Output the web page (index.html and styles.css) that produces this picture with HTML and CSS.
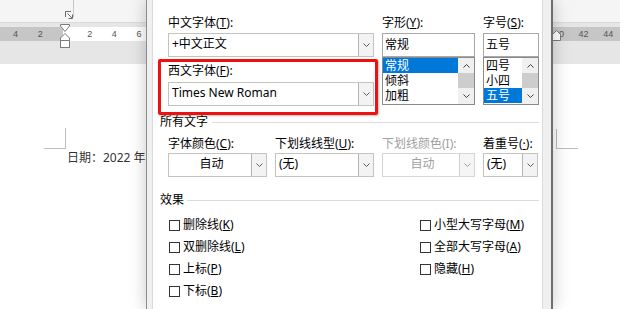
FILE: index.html
```html
<!DOCTYPE html>
<html lang="zh-CN">
<head>
<meta charset="utf-8">
<title>字体</title>
<link rel="stylesheet" href="styles.css">
</head>
<body>
<div class="app">
  <div class="ribbon">
    <svg class="launcher" width="8" height="8" viewBox="0 0 8 8">
      <path d="M0.5 6V0.5H6" fill="none" stroke="#6a6a6a"/>
      <path d="M2.5 2.5L7 7" fill="none" stroke="#6a6a6a"/>
      <path d="M3.5 7.5H7.5V3.5" fill="none" stroke="#6a6a6a"/>
    </svg>
    <span class="group-sep"></span>
  </div>
  <div class="rulerband">
    <div class="ruler">
      <span class="rn">4</span><span class="rn">2</span><span class="rn"></span>
      <span class="rn">2</span><span class="rn">4</span><span class="rn">6</span>
      <span class="rn-gap"></span>
      <span class="rn">40</span><span class="rn">42</span><span class="rn">44</span>
      <svg class="marker-left" width="11" height="25" viewBox="0 0 11 25">
        <path d="M0.5 0.5H9.5V2L5 7.5L0.5 2Z" fill="#fff" stroke="#7c7c7c"/>
        <path d="M5 9.5L9.5 14V16.5H0.5V14Z" fill="#fff" stroke="#7c7c7c"/>
        <rect x="0.5" y="16.5" width="9" height="7" fill="#fff" stroke="#7c7c7c"/>
      </svg>
      <svg class="marker-right" width="9" height="12" viewBox="0 0 9 12">
        <path d="M4.5 0.5L8.5 4.5V10.5H0.5V4.5Z" fill="#fff" stroke="#7c7c7c"/>
      </svg>
    </div>
  </div>
  <div class="doc">
    <span class="crop-mark crop-left"></span>
    <span class="crop-mark crop-right"></span>
    <p class="date">日期：2022 年</p>
  </div>

  <div class="dialog">
    <div class="panel">
      <div class="font-grid">
        <div class="col">
          <label class="lbl">中文字体(<u>T</u>):</label>
          <div class="combo"><span class="val">+中文正文</span><span class="drop"><svg width="7" height="4" viewBox="0 0 7 4"><path d="M0.5 0.5L3.5 3.5L6.5 0.5" fill="none" stroke="#5c5c5c"/></svg></span></div>
          <label class="lbl lbl-second">西文字体(<u>F</u>):</label>
          <div class="combo"><span class="val">Times New Roman</span><span class="drop"><svg width="7" height="4" viewBox="0 0 7 4"><path d="M0.5 0.5L3.5 3.5L6.5 0.5" fill="none" stroke="#5c5c5c"/></svg></span></div>
        </div>
        <div class="col">
          <label class="lbl">字形(<u>Y</u>):</label>
          <div class="textbox">常规</div>
          <div class="listbox">
            <ul class="items">
              <li class="sel">常规</li>
              <li>倾斜</li>
              <li>加粗</li>
            </ul>
            <div class="scroll">
              <span class="arrow"><svg width="7" height="4" viewBox="0 0 7 4"><path d="M0.5 3.5L3.5 0.5L6.5 3.5" fill="none" stroke="#404040"/></svg></span>
              <span class="thumb"></span>
              <span class="arrow"><svg width="7" height="4" viewBox="0 0 7 4"><path d="M0.5 0.5L3.5 3.5L6.5 0.5" fill="none" stroke="#404040"/></svg></span>
            </div>
          </div>
        </div>
        <div class="col">
          <label class="lbl">字号(<u>S</u>):</label>
          <div class="textbox">五号</div>
          <div class="listbox">
            <ul class="items">
              <li>四号</li>
              <li>小四</li>
              <li class="sel">五号</li>
            </ul>
            <div class="scroll">
              <span class="arrow"><svg width="7" height="4" viewBox="0 0 7 4"><path d="M0.5 3.5L3.5 0.5L6.5 3.5" fill="none" stroke="#404040"/></svg></span>
              <span class="thumb"></span>
              <span class="arrow"><svg width="7" height="4" viewBox="0 0 7 4"><path d="M0.5 0.5L3.5 3.5L6.5 0.5" fill="none" stroke="#404040"/></svg></span>
            </div>
          </div>
        </div>
      </div>

      <div class="group-head head-all"><span>所有文字</span><span class="rule"></span></div>

      <div class="attr-grid">
        <div class="col">
          <label class="lbl lbl-tight">字体颜色(<u>C</u>):</label>
          <div class="combo"><span class="val center">自动</span><span class="drop"><svg width="7" height="4" viewBox="0 0 7 4"><path d="M0.5 0.5L3.5 3.5L6.5 0.5" fill="none" stroke="#5c5c5c"/></svg></span></div>
        </div>
        <div class="col">
          <label class="lbl lbl-tight">下划线线型(<u>U</u>):</label>
          <div class="combo"><span class="val">(无)</span><span class="drop"><svg width="7" height="4" viewBox="0 0 7 4"><path d="M0.5 0.5L3.5 3.5L6.5 0.5" fill="none" stroke="#5c5c5c"/></svg></span></div>
        </div>
        <div class="col disabled">
          <label class="lbl lbl-tight">下划线颜色(I):</label>
          <div class="combo"><span class="val center">自动</span><span class="drop"><svg width="7" height="4" viewBox="0 0 7 4"><path d="M0.5 0.5L3.5 3.5L6.5 0.5" fill="none" stroke="#9a9a9a"/></svg></span></div>
        </div>
        <div class="col">
          <label class="lbl lbl-tight">着重号(<u>·</u>):</label>
          <div class="combo"><span class="val">(无)</span><span class="drop"><svg width="7" height="4" viewBox="0 0 7 4"><path d="M0.5 0.5L3.5 3.5L6.5 0.5" fill="none" stroke="#5c5c5c"/></svg></span></div>
        </div>
      </div>

      <div class="group-head head-effects"><span>效果</span><span class="rule"></span></div>

      <div class="effects">
        <div class="eff-col eff-left">
          <label class="check"><span class="box"></span><span class="txt">删除线(<u>K</u>)</span></label>
          <label class="check"><span class="box"></span><span class="txt">双删除线(<u>L</u>)</span></label>
          <label class="check"><span class="box"></span><span class="txt">上标(<u>P</u>)</span></label>
          <label class="check"><span class="box"></span><span class="txt">下标(<u>B</u>)</span></label>
        </div>
        <div class="eff-col">
          <label class="check"><span class="box"></span><span class="txt">小型大写字母(<u>M</u>)</span></label>
          <label class="check"><span class="box"></span><span class="txt">全部大写字母(<u>A</u>)</span></label>
          <label class="check"><span class="box"></span><span class="txt">隐藏(<u>H</u>)</span></label>
        </div>
      </div>
    </div>
  </div>

  <div class="highlight"></div>
</div>
</body>
</html>
```

FILE: styles.css
```css
* { box-sizing: border-box; margin: 0; padding: 0; }

html, body {
  width: 620px;
  height: 309px;
  overflow: hidden;
}

body {
  font-family: "Noto Sans", "Noto Sans CJK SC", sans-serif;
  font-size: 12px;
  color: #000;
  background: #fff;
}

.app {
  position: relative;
  width: 620px;
  height: 309px;
  overflow: hidden;
  display: flex;
  flex-direction: column;
}

/* ---------- Word background ---------- */
.ribbon {
  height: 23px;
  flex: none;
  background: #f5f5f5;
  border-bottom: 1px solid #dadada;
  display: flex;
  align-items: flex-start;
  padding-left: 65px;
}

.launcher { margin-top: 11px; }

.group-sep {
  width: 1px;
  height: 17px;
  background: #c8c8c8;
}

.rulerband {
  height: 41px;
  flex: none;
  background: #e6e6e6;
  padding-top: 4px;
}

.ruler {
  position: relative;
  height: 14px;
  display: flex;
  padding-left: 3.25px;
  background: linear-gradient(to right, #c6c6c6 0, #c6c6c6 63px, #fff 63px, #fff 553px, #c6c6c6 553px);
  font-family: "Liberation Sans", Arial, sans-serif;
  font-size: 9px;
  line-height: 14px;
  color: #555;
}

.rn {
  flex: none;
  width: 24.7px;
  text-align: center;
}

.rn-gap {
  flex: none;
  width: 395.2px;
}

.marker-left {
  position: absolute;
  left: 60px;
  top: -3px;
}

.marker-right {
  position: absolute;
  left: 552px;
  top: 3px;
}

.doc {
  flex: 1;
  position: relative;
  background: #fff;
  padding: 86px 0 0 67px;
}

.crop-mark {
  position: absolute;
  width: 22px;
  height: 21px;
  border-bottom: 1px solid #bdbdbd;
}

.crop-left {
  left: 44px;
  top: 64px;
  border-right: 1px solid #bdbdbd;
}

.crop-right {
  left: 556px;
  top: 65px;
  height: 20px;
  border-left: 1px solid #bdbdbd;
}

.date {
  font-size: 12px;
  line-height: 16px;
  color: #333;
  white-space: nowrap;
}

/* ---------- Dialog ---------- */
.dialog {
  position: absolute;
  left: 146px;
  top: 0;
  width: 407px;
  height: 309px;
  z-index: 2;
  background: #f0f0f0;
  border-left: 1px solid #8c8c8c;
  border-right: 2px solid #6e6e6e;
  padding: 0 8px 0 5px;
  box-shadow: 0 0 16px rgba(0, 0, 0, 0.22);
}

.panel {
  height: 100%;
  background: #fff;
  border-left: 1px solid #dadada;
  border-right: 1px solid #dadada;
  padding: 15px 3px 0 7px;
}

.font-grid {
  margin-left: 8px;
  display: grid;
  grid-template-columns: 206px 93px 56px;
  column-gap: 8px;
  align-items: start;
}

.col { display: flex; flex-direction: column; }

.lbl {
  display: block;
  height: 16px;
  line-height: 16px;
  margin-bottom: 2px;
  white-space: nowrap;
}

.lbl-second {
  margin-top: 6px;
  margin-bottom: 3px;
}

.lbl-tight { margin-bottom: 1px; }

.combo {
  height: 24px;
  display: flex;
  border: 1px solid #c3c3c3;
  background: #fff;
}

.combo .val {
  flex: 1;
  padding-left: 3px;
  line-height: 20px;
  white-space: nowrap;
  overflow: hidden;
}

.combo .val.center {
  text-align: center;
}

.drop {
  width: 15px;
  flex: none;
  border-left: 1px solid #b4b4b4;
  background: #f3f3f3;
  display: flex;
  align-items: center;
  justify-content: center;
}

.textbox {
  height: 24px;
  border: 1px solid #a8a8a8;
  padding-left: 2px;
  line-height: 21px;
}

.listbox {
  height: 48px;
  display: flex;
  border: 1px solid #8a8a8a;
}

.items {
  flex: 1;
  list-style: none;
}

.items li {
  height: 15px;
  line-height: 15px;
  padding-left: 2px;
  white-space: nowrap;
}

.items li.sel {
  background: #0078d7;
  color: #fff;
}

.scroll {
  width: 16px;
  flex: none;
  display: flex;
  flex-direction: column;
  background: #f0f0f0;
}

.arrow {
  height: 15px;
  display: flex;
  align-items: center;
  justify-content: center;
}

.thumb {
  height: 15px;
  background: #cdcdcd;
}

.group-head {
  height: 16px;
  line-height: 16px;
  display: flex;
  align-items: center;
  white-space: nowrap;
}

.group-head .rule {
  flex: 1;
  height: 1px;
  background: #dcdcdc;
  margin-left: 4px;
}

.head-all { margin-top: 8px; }

.head-effects { margin-top: 15px; }
.head-effects .rule { margin-left: 3px; }

.attr-grid {
  margin-left: 8px;
  margin-top: 6px;
  display: grid;
  grid-template-columns: 99px 99px 93px 55px;
  column-gap: 8px;
}

.disabled { color: #a0a0a0; }
.disabled .combo { border-color: #d6d6d6; }
.disabled .drop { border-left-color: #d0d0d0; background: #f5f5f5; }

.effects {
  margin-top: 6px;
  margin-left: 9px;
  display: flex;
}

.eff-col {
  display: flex;
  flex-direction: column;
}

.eff-left { width: 251px; }

.check {
  height: 22px;
  display: flex;
  align-items: center;
  gap: 3px;
  white-space: nowrap;
}

.check .txt {
  line-height: 16px;
}

.box {
  width: 11px;
  height: 11px;
  flex: none;
  border: 1px solid #333;
  background: #fff;
}

/* ---------- annotation ---------- */
.highlight {
  position: absolute;
  left: 158px;
  top: 59px;
  width: 220px;
  height: 56px;
  z-index: 3;
  border: 3px solid #ee1111;
  border-radius: 2px;
  box-shadow: 1px 1px 2px rgba(0, 0, 0, 0.25);
}
```
